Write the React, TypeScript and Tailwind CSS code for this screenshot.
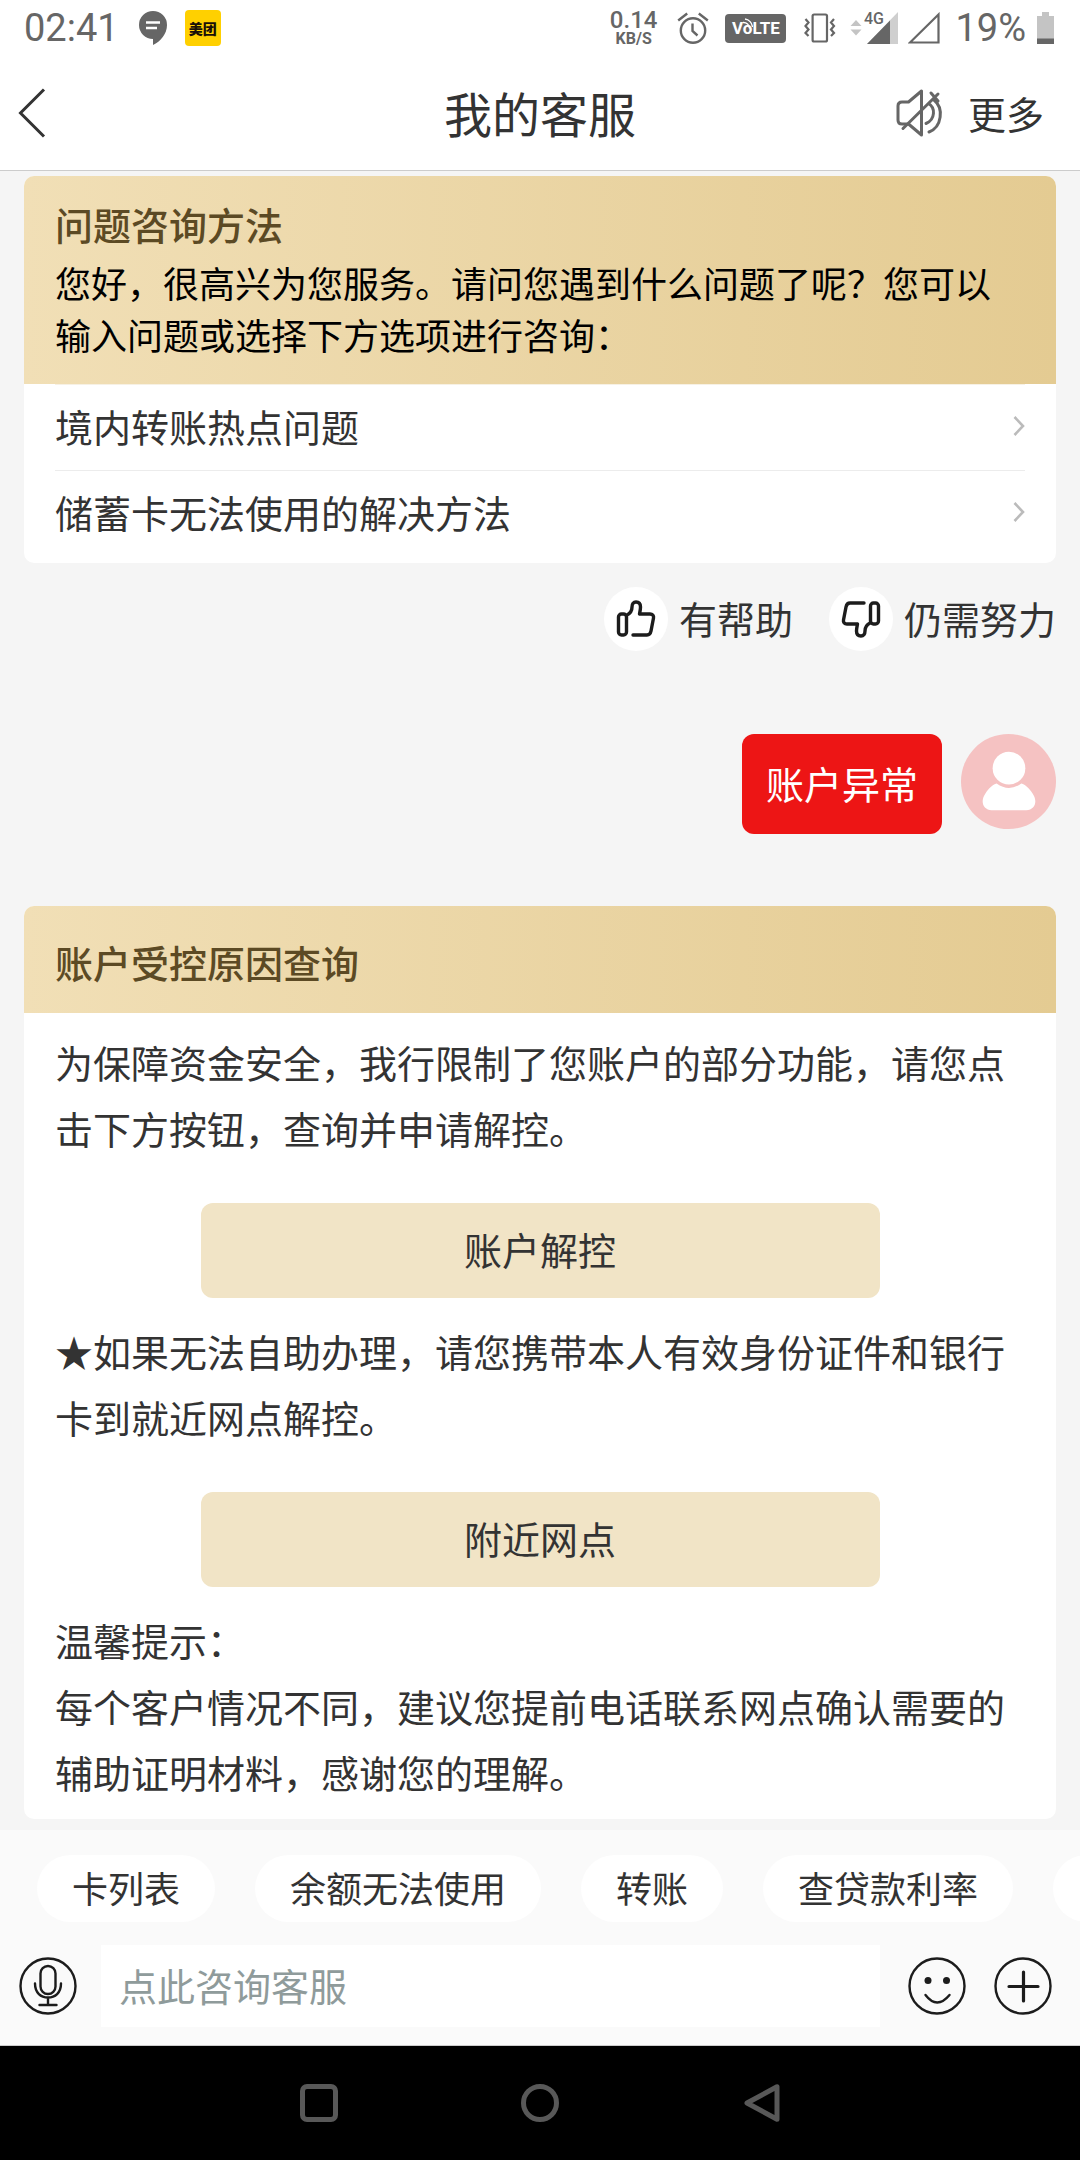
import { useState } from 'react'

interface GoldCardProps {
  header: React.ReactNode
  children: React.ReactNode
}

const hotQuestions = ['境内转账热点问题', '储蓄卡无法使用的解决方法']
const shortcuts = ['卡列表', '余额无法使用', '转账', '查贷款利率']

function StatusBar() {
  return (
    <div className="flex h-14 items-center justify-between bg-white pr-[26px] pl-6 font-['Roboto','Noto_Sans_CJK_SC',sans-serif] text-[#666]">
      <div className="flex items-center">
        <span className="text-[38px] leading-none">02:41</span>
        <svg className="ml-5 h-[34px] w-7" viewBox="0 0 28 34" fill="none">
          <path d="M14 0a14 14 0 0 1 14 14c0 9-6.500 16.500-14 20v-6a14 14 0 0 1 0-28z" fill="#666" />
          <path d="M7 11.500h14M7 17h11" stroke="#fff" strokeWidth="2.600" />
        </svg>
        <span className="ml-[18px] flex h-9 w-9 items-center justify-center rounded bg-[#ffd000] font-['Noto_Sans_CJK_SC',sans-serif] text-[14px] leading-none font-black text-[#1a1008]">
          美团
        </span>
      </div>

      <div className="flex items-center">
        <div className="flex flex-col items-center">
          <span className="text-[24px] leading-[22px] font-medium">0.14</span>
          <span className="text-[16px] leading-[16px] font-bold">KB/S</span>
        </div>
        {/* alarm */}
        <svg className="ml-5 h-8 w-8" viewBox="0 0 32 32" fill="none" stroke="#666" strokeWidth="2.400">
          <circle cx="16" cy="18.500" r="12.200" />
          <path d="M15.500 11.500v7.500l5 4.500M1.200 8.500l9-7M30.800 8.500l-9-7" />
        </svg>
        <span className="relative ml-4 flex h-[29px] w-[61px] items-center justify-center rounded-sm bg-[#666] text-[17px] leading-none font-bold text-white">
          VoLTE
          <svg className="absolute top-1 left-4 h-3 w-3" viewBox="0 0 12 12" fill="none" stroke="#fff" strokeWidth="1.300">
            <path d="M2 4.500a6 6 0 0 1 6.500 6M4 1a9 9 0 0 1 7.500 8" />
          </svg>
        </span>
        {/* vibrate */}
        <svg className="ml-[18px] h-[30px] w-8" viewBox="0 0 32 30" fill="none" stroke="#666" strokeWidth="2.200">
          <rect x="8.600" y="1.500" width="14.400" height="27" rx="1.500" />
          <path d="M1.500 6l3 3.500-3 3.500 3 3.500-3 3.500 3 3M30 6l-3 3.500 3 3.500-3 3.500 3 3.500-3 3" />
        </svg>
        {/* mobile data signal */}
        <svg className="ml-3.5 h-10 w-12" viewBox="0 0 48 40">
          <path d="M6 12l5.500 6H.500zM6 27.500l5.500-6H.500z" fill="#c4c4c4" />
          <path d="M48 4v32H17z" fill="#cfcfcf" />
          <path d="M13 3h21v15H13z" fill="#fff" />
          <path d="M40 12.500V36H17z" fill="#666" />
          <text x="14" y="16" fontSize="16" fontWeight="500" fill="#666">
            4G
          </text>
        </svg>
        <svg className="ml-2.5 h-8 w-8" viewBox="0 0 32 32" fill="none" stroke="#666" strokeWidth="2.200">
          <path d="M30.500 2.500v28H2z" />
        </svg>
        <span className="ml-[15px] text-[38px] leading-none">19%</span>
        <svg className="ml-[11px] h-8 w-[17px]" viewBox="0 0 17 32">
          <path d="M5 0h7v4h5v28H0V4h5z" fill="#c4c4c4" />
          <path d="M0 26.500h17V32H0z" fill="#666" />
        </svg>
      </div>
    </div>
  )
}

function GoldCard({ header, children }: GoldCardProps) {
  return (
    <section className="overflow-hidden rounded-[10px] bg-white">
      <div className="bg-linear-to-r from-[#f1dfb6] to-[#e4cb92] px-[31px]">{header}</div>
      <div className="px-[31px]">{children}</div>
    </section>
  )
}

function ActionButton({ label }: { label: string }) {
  return (
    <button className="mx-auto mt-[42px] mb-5 block h-[95px] w-[70%] rounded-xl bg-[#f1e4c6] pb-[3px] text-[38px] text-[#333]">
      {label}
    </button>
  )
}

function ThumbIcon({ down = false }: { down?: boolean }) {
  return (
    <svg
      className={down ? 'h-10 w-10 rotate-180' : 'h-10 w-10'}
      viewBox="0 0 40 40"
      fill="none"
      stroke="#1c1c1c"
      strokeWidth="3.400"
      strokeLinecap="round"
      strokeLinejoin="round"
    >
      <rect x="2.500" y="15" width="8" height="21" rx="3" />
      <path d="M11 16c3-1.500 5-4 5-8 0-3 1.500-5 4-5 3 0 4.500 2 4.500 5 0 2.500-.500 4.500-1 7H34c2.500 0 4 1.500 3.500 4l-2.500 13c-.500 2.500-2 4-4 4H17" />
    </svg>
  )
}

export default function App() {
  const [message, setMessage] = useState('')

  return (
    <div className="flex min-h-screen flex-col bg-[#f5f5f5] font-['Noto_Sans_CJK_SC',sans-serif] text-[#333]">
      <StatusBar />

      <header className="grid h-[115px] grid-cols-[1fr_auto_1fr] items-center border-b border-[#ccc] bg-white px-[18px]">
        <button aria-label="返回" className="justify-self-start">
          <svg className="h-[50px] w-7" viewBox="0 0 28 50" fill="none" stroke="#333" strokeWidth="3">
            <path d="M26 1.500L2.500 25 26 48.500" />
          </svg>
        </button>
        <h1 className="pb-[3px] text-[48px] leading-none">我的客服</h1>
        <div className="flex items-center justify-self-end pr-[18px]">
          <button aria-label="静音">
            <svg className="h-12 w-12" viewBox="0 0 48 48" fill="none" stroke="#666" strokeWidth="3" strokeLinejoin="round">
              <path d="M25.500 2v44L12.500 35H6c-2.500 0-4-1.500-4-4V17c0-2.500 1.500-4 4-4h6.500z" />
              <path d="M7 39.500L42 5M35 4l7 8M32.500 14.500c7 4 7 16-2.500 20M38 11c10 8 8 27-5 32" strokeLinecap="round" />
            </svg>
          </button>
          <button className="ml-6 text-[38px] leading-none">更多</button>
        </div>
      </header>

      <main className="flex-1 px-6 pt-[5px] pb-[11px]">
        <GoldCard
          header={
            <div className="pt-[18px] pb-6">
              <h2 className="pb-0.5 text-[38px] leading-[60px] font-medium text-[#5c4a24]">问题咨询方法</h2>
              <p className="text-[36px] leading-[52px] text-black">
                您好，很高兴为您服务。请问您遇到什么问题了呢？您可以输入问题或选择下方选项进行咨询：
              </p>
            </div>
          }
        >
          <ul className="pb-[7px]">
            {hotQuestions.map((question) => (
              <li key={question} className="border-t border-[#ececec] first:border-[#f7f1e4]">
                <a href="#" className="flex h-[85px] items-center justify-between pb-[3px] text-[38px] leading-none">
                  {question}
                  <svg className="h-5 w-3" viewBox="0 0 12 20" fill="none" stroke="#bbb" strokeWidth="2.600">
                    <path d="M1.500 1l8.500 9-8.500 9" />
                  </svg>
                </a>
              </li>
            ))}
          </ul>
        </GoldCard>

        <div className="mt-6 flex justify-end gap-9 text-[38px] leading-none">
          <button className="flex items-center gap-[11px]">
            <span className="flex h-16 w-16 items-center justify-center rounded-full bg-white">
              <ThumbIcon />
            </span>
            <span className="pb-[3px]">有帮助</span>
          </button>
          <button className="flex items-center gap-[11px]">
            <span className="flex h-16 w-16 items-center justify-center rounded-full bg-white">
              <ThumbIcon down />
            </span>
            <span className="pb-[3px]">仍需努力</span>
          </button>
        </div>

        <div className="mt-[83px] flex items-start justify-end gap-[19px]">
          <p className="rounded-xl bg-[#ed1515] px-6 pb-0.5 text-[38px] leading-[98px] text-white">账户异常</p>
          <svg className="h-[95px] w-[95px]" viewBox="0 0 96 96">
            <circle cx="48" cy="48" r="48" fill="#f5c2c2" />
            <circle cx="48.500" cy="34.500" r="16.500" fill="#fff" />
            <path d="M36 50q12.500 9 25 0c4 1 8 5 11 9.500 6 8 3 17.500-6 17.500H31c-9 0-12-9.500-6-17.500 3-4.500 7-8.500 11-9.500z" fill="#fff" />
          </svg>
        </div>

        <div className="mt-[72px]">
          <GoldCard
            header={
              <h2 className="pt-1 text-[38px] leading-[103px] font-medium text-[#5c4a24]">账户受控原因查询</h2>
            }
          >
            <div className="pt-4 pb-3.5 text-[38px] leading-[66px]">
              <p>为保障资金安全，我行限制了您账户的部分功能，请您点击下方按钮，查询并申请解控。</p>
              <ActionButton label="账户解控" />
              <p>★如果无法自助办理，请您携带本人有效身份证件和银行卡到就近网点解控。</p>
              <ActionButton label="附近网点" />
              <p>温馨提示：</p>
              <p>每个客户情况不同，建议您提前电话联系网点确认需要的辅助证明材料，感谢您的理解。</p>
            </div>
          </GoldCard>
        </div>
      </main>

      <footer className="border-b border-[#ccc] bg-[#fafafa] pt-[25px] pb-[18px]">
        <div className="flex gap-10 overflow-hidden pl-[37px]">
          {shortcuts.map((item) => (
            <button key={item} className="h-[67px] shrink-0 rounded-full bg-white px-[35px] pb-[3px] text-[36px] leading-none">
              {item}
            </button>
          ))}
          <button aria-label="更多问题" className="h-[67px] w-44 shrink-0 rounded-full bg-white" />
        </div>
        <div className="mt-[23px] flex items-center pr-7 pl-[19px]">
          <button aria-label="语音输入">
            <svg className="h-[58px] w-[58px]" viewBox="0 0 58 58" fill="none" stroke="#1c1c1c" strokeWidth="2.400" strokeLinecap="round">
              <circle cx="29" cy="29" r="27.500" />
              <rect x="21.500" y="9" width="15" height="28" rx="7.500" />
              <path d="M16 26.500c0 9.500 6 14 13 14s13-4.500 13-14M29 40.500V48M20.500 48h17" />
            </svg>
          </button>
          <input
            aria-label="点此咨询客服"
            className="mx-6 h-[82px] min-w-0 flex-1 bg-white pb-[3px] pl-[18px] text-[38px] outline-none placeholder:text-[#8f9b9b]"
            placeholder="点此咨询客服"
            value={message}
            onChange={(e) => setMessage(e.target.value)}
          />
          <button aria-label="表情" className="ml-1">
            <svg className="h-[58px] w-[58px]" viewBox="0 0 58 58" fill="none" stroke="#1c1c1c" strokeWidth="2.400" strokeLinecap="round">
              <circle cx="29" cy="29" r="27.500" />
              <circle cx="20" cy="23.500" r="3.500" fill="#1c1c1c" stroke="none" />
              <circle cx="38.500" cy="23.500" r="3.500" fill="#1c1c1c" stroke="none" />
              <path d="M17.500 38q11.500 15 24 0" />
            </svg>
          </button>
          <button aria-label="更多功能" className="ml-7">
            <svg className="h-[58px] w-[58px]" viewBox="0 0 58 58" fill="none" stroke="#1c1c1c" strokeWidth="2.400" strokeLinecap="round">
              <circle cx="29" cy="29" r="27.500" />
              <path d="M15 29.500h29M29.500 15v29" strokeWidth="3.200" />
            </svg>
          </button>
        </div>
      </footer>

      <nav className="flex h-[114px] items-center justify-center gap-[183px] bg-black">
        <button aria-label="最近任务">
          <svg className="h-[38px] w-[38px]" viewBox="0 0 38 38" fill="none" stroke="#585858" strokeWidth="5">
            <rect x="2.500" y="2.500" width="33" height="33" rx="4.500" />
          </svg>
        </button>
        <button aria-label="主屏幕">
          <svg className="h-[38px] w-[38px]" viewBox="0 0 38 38" fill="none" stroke="#585858" strokeWidth="5">
            <circle cx="19" cy="19" r="16.500" />
          </svg>
        </button>
        <button aria-label="后退">
          <svg className="h-[38px] w-[38px]" viewBox="0 0 38 38" fill="none" stroke="#585858" strokeWidth="5" strokeLinejoin="round">
            <path d="M35 2.800v32.400L5 19z" />
          </svg>
        </button>
      </nav>
    </div>
  )
}
